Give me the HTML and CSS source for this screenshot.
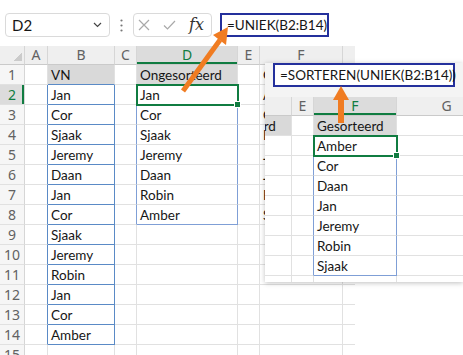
FILE: index.html
```html
<!DOCTYPE html>
<html>
<head>
  <title>UNIEK en SORTEREN</title>
  <meta charset="UTF-8" />
  <link rel="stylesheet" href="styles.css">
</head>
<body>
  <div class="toolbar">
    <div class="namebox">
      <span>D2</span>
      <svg width="9" height="6" viewBox="0 0 9 6"><path d="M1 1l3.5 3.5L8 1" fill="none" stroke="#444" stroke-width="1.2"/></svg>
    </div>
    <div class="grip">
      <svg width="3" height="13" viewBox="0 0 3 13"><circle cx="1.5" cy="1.5" r="1.1"/><circle cx="1.5" cy="6.5" r="1.1"/><circle cx="1.5" cy="11.5" r="1.1"/></svg>
    </div>
    <div class="fxbox">
      <svg width="12" height="12" viewBox="0 0 12 12"><path d="M1 1l10 10M11 1L1 11" stroke="#a9a9a9" stroke-width="1.2"/></svg>
      <svg width="13" height="10" viewBox="0 0 13 10"><path d="M1 5.5l3.5 3.5L12 1" fill="none" stroke="#a9a9a9" stroke-width="1.2"/></svg>
      <span class="fx">fx</span>
    </div>
    <div class="formula">=UNIEK(B2:B14)</div>
  </div>

  <table class="sheet main">
    <colgroup>
      <col class="w-rh"><col class="w-a"><col class="w-b"><col class="w-c"><col class="w-d"><col class="w-e"><col class="w-f"><col class="w-g">
    </colgroup>
    <thead>
      <tr><th class="corner"></th><th>A</th><th>B</th><th>C</th><th class="on">D</th><th>E</th><th>F</th><th class="last"></th></tr>
    </thead>
    <tbody>
      <tr><th class="rh">1</th><td></td><td class="fill lst-t">VN</td><td></td><td class="fill">Ongesorteerd</td><td></td><td>Gesorteerd</td><td class="last"></td></tr>
      <tr><th class="rh on">2</th><td class="lst-l"></td><td class="lst">Jan</td><td class="sp-l"></td><td class="sp act">Jan</td><td></td><td>Amber</td><td class="last"></td></tr>
      <tr><th class="rh">3</th><td class="lst-l"></td><td class="lst">Cor</td><td class="sp-l"></td><td class="sp">Cor</td><td></td><td>Cor</td><td class="last"></td></tr>
      <tr><th class="rh">4</th><td class="lst-l"></td><td class="lst">Sjaak</td><td class="sp-l"></td><td class="sp">Sjaak</td><td></td><td>Daan</td><td class="last"></td></tr>
      <tr><th class="rh">5</th><td class="lst-l"></td><td class="lst">Jeremy</td><td class="sp-l"></td><td class="sp">Jeremy</td><td></td><td>Jan</td><td class="last"></td></tr>
      <tr><th class="rh">6</th><td class="lst-l"></td><td class="lst">Daan</td><td class="sp-l"></td><td class="sp">Daan</td><td></td><td>Jeremy</td><td class="last"></td></tr>
      <tr><th class="rh">7</th><td class="lst-l"></td><td class="lst">Jan</td><td class="sp-l"></td><td class="sp">Robin</td><td></td><td>Robin</td><td class="last"></td></tr>
      <tr><th class="rh">8</th><td class="lst-l"></td><td class="lst">Cor</td><td class="sp-l"></td><td class="sp sp-b">Amber</td><td></td><td>Sjaak</td><td class="last"></td></tr>
      <tr><th class="rh">9</th><td class="lst-l"></td><td class="lst">Sjaak</td><td></td><td></td><td></td><td></td><td class="last"></td></tr>
      <tr><th class="rh">10</th><td class="lst-l"></td><td class="lst">Jeremy</td><td></td><td></td><td></td><td></td><td class="last"></td></tr>
      <tr><th class="rh">11</th><td class="lst-l"></td><td class="lst">Robin</td><td></td><td></td><td></td><td></td><td class="last"></td></tr>
      <tr><th class="rh">12</th><td class="lst-l"></td><td class="lst">Jan</td><td></td><td></td><td></td><td></td><td class="last"></td></tr>
      <tr><th class="rh">13</th><td class="lst-l"></td><td class="lst">Cor</td><td></td><td></td><td></td><td></td><td class="last"></td></tr>
      <tr><th class="rh">14</th><td class="lst-l"></td><td class="lst">Amber</td><td></td><td></td><td></td><td></td><td class="last"></td></tr>
      <tr><th class="rh">15</th><td></td><td></td><td></td><td></td><td></td><td></td><td class="last"></td></tr>
    </tbody>
  </table>

  <!-- second screenshot pasted on top -->
  <div class="snip">
    <div class="snip-bar">
      <div class="formula wide">=SORTEREN(UNIEK(B2:B14))</div>
    </div>
    <table class="sheet part">
      <colgroup>
        <col class="w-d"><col class="w-e"><col class="w-f"><col class="w-gg">
      </colgroup>
      <thead>
        <tr><th>D</th><th>E</th><th class="on">F</th><th>G</th></tr>
      </thead>
      <tbody>
        <tr><td class="fill">Ongesorteerd</td><td></td><td class="fill">Gesorteerd</td><td></td></tr>
        <tr><td>Jan</td><td class="sp-l"></td><td class="sp act">Amber</td><td></td></tr>
        <tr><td>Cor</td><td class="sp-l"></td><td class="sp">Cor</td><td></td></tr>
        <tr><td>Sjaak</td><td class="sp-l"></td><td class="sp">Daan</td><td></td></tr>
        <tr><td>Jeremy</td><td class="sp-l"></td><td class="sp">Jan</td><td></td></tr>
        <tr><td>Daan</td><td class="sp-l"></td><td class="sp">Jeremy</td><td></td></tr>
        <tr><td>Robin</td><td class="sp-l"></td><td class="sp">Robin</td><td></td></tr>
        <tr><td>Amber</td><td class="sp-l"></td><td class="sp sp-b">Sjaak</td><td></td></tr>
        <tr><td></td><td></td><td></td><td></td></tr>
      </tbody>
    </table>
  </div>

  <svg class="arrows" width="463" height="355" viewBox="0 0 463 355">
    <line x1="183" y1="91" x2="220" y2="40" />
    <polygon points="228,27 213,35 226,45" />
    <line class="thick" x1="341" y1="123" x2="341" y2="98" />
    <polygon points="341,86 333,100 349,100" />
  </svg>
</body>
</html>
```

FILE: styles.css
```css
body {
  margin: 0;
  width: 463px;
  height: 355px;
  overflow: hidden;
  position: relative;
  background: #fff;
  font-family: Lato, "Liberation Sans", sans-serif;
  color: #161616;
}

/* formula bar */
.toolbar {
  display: flex;
  align-items: flex-start;
  height: 46px;
  box-sizing: border-box;
  padding: 13px 0 0 5px;
}

.namebox {
  width: 105px;
  height: 24px;
  box-sizing: border-box;
  border: 1px solid #dadada;
  border-radius: 4px;
  display: flex;
  align-items: center;
  justify-content: space-between;
  padding: 0 7px 0 6px;
  font-size: 15px;
}

.grip {
  width: 23px;
  height: 24px;
  display: flex;
  align-items: center;
  justify-content: center;
  fill: #777;
}

.fxbox {
  width: 79px;
  height: 24px;
  box-sizing: border-box;
  border: 1px solid #dadada;
  border-radius: 4px;
  display: flex;
  align-items: center;
  gap: 13px;
  padding-left: 4px;
}

.fx {
  font-family: "DejaVu Serif", serif;
  font-style: italic;
  font-size: 16px;
  color: #333;
  margin-top: -2px;
}

.formula {
  margin-left: 8px;
  width: 109px;
  height: 24px;
  box-sizing: border-box;
  border: 2px solid #24309c;
  background: #fff;
  padding-left: 5px;
  font-size: 13.5px;
  line-height: 20px;
  white-space: nowrap;
}

/* grid */
.sheet {
  border-collapse: separate;
  border-spacing: 0;
  table-layout: fixed;
  font-size: 13.5px;
}

.main { width: 355px; }
.part { width: 306px; margin-left: -74px; }

.w-rh { width: 25px; }
.w-a { width: 23px; }
.w-b { width: 67px; }
.w-c { width: 22px; }
.w-d { width: 101px; }
.w-e { width: 22px; }
.w-f { width: 83px; }
.w-g { width: 12px; }
.w-gg { width: 100px; }

.sheet th {
  padding: 0;
  background: #efefef;
  border-right: 1px solid #d6d6d6;
  border-bottom: 1px solid #cacaca;
  font-family: "Noto Sans", sans-serif;
  font-size: 14px;
  font-weight: normal;
  color: #626262;
  text-align: center;
}

.sheet thead th {
  height: 18px;
  line-height: 18px;
}

.sheet tbody th {
  height: 19px;
  line-height: 19px;
}

.sheet th.rh {
  background: #f6f6f6;
  border-right-color: #d6d6d6;
  border-bottom-color: #e1e1e1;
}

.sheet th.corner {
  background: #efefef linear-gradient(135deg, transparent 50%, #cbcbcb 50%) no-repeat right 2px bottom 3px / 9px 9px;
}

.sheet th.on {
  background: #dcdcdc;
  color: #107c41;
  box-shadow: inset 0 -2px 0 #107c41;
}

.sheet th.rh.on {
  box-shadow: inset -2px 0 0 #107c41;
}

.sheet td {
  height: 18px;
  line-height: 18px;
  padding: 1px 0 0 3px;
  border-right: 1px solid #e1e1e1;
  border-bottom: 1px solid #e1e1e1;
  white-space: nowrap;
  text-align: left;
}

.sheet .last { border-right: none; }

.fill { background: #d9d9d9; }

/* table range in B */
.lst { border-right-color: #5a8ac6 !important; border-bottom-color: #5a8ac6 !important; }
.lst-l { border-right-color: #5a8ac6 !important; }
.lst-t { border-bottom-color: #5a8ac6 !important; }

/* spill range */
.sp { border-right-color: #7f9fd6 !important; }
.sp-l { border-right-color: #7f9fd6 !important; }
.sp-b { border-bottom-color: #7f9fd6 !important; }

.act {
  position: relative;
  outline: 2px solid #107c41;
  outline-offset: -1px;
}

.act::after {
  content: "";
  position: absolute;
  right: -4px;
  bottom: -4px;
  width: 5px;
  height: 5px;
  background: #107c41;
  border: 1px solid #fff;
}

/* pasted second screenshot */
.snip {
  position: absolute;
  left: 265px;
  top: 63px;
  width: 198px;
  height: 219px;
  overflow: hidden;
  background: #fff;
  box-shadow: 0 1px 5px rgba(0,0,0,0.25);
}

.snip-bar {
  height: 34px;
  box-sizing: border-box;
  background: #f4f4f4;
  padding-left: 8px;
}

.formula.wide {
  margin-left: 0;
  width: 182px;
}

.arrows {
  position: absolute;
  top: 0;
  left: 0;
  pointer-events: none;
  stroke: #f07c22;
  fill: #f07c22;
}

.arrows line { stroke-width: 5; }
.arrows line.thick { stroke-width: 6; }
.arrows polygon { stroke: none; }
```
